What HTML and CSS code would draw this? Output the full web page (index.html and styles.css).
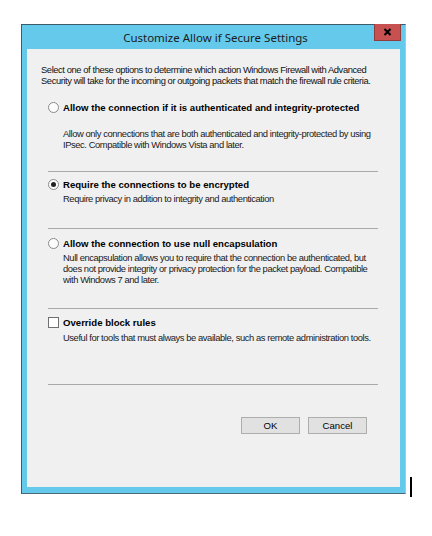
FILE: index.html
```html
<!DOCTYPE html>
<html>
<head>
<meta charset="utf-8">
<link rel="stylesheet" href="styles.css">
</head>
<body>
<div class="window">
  <div class="titlebar">
    <span class="title">Customize Allow if Secure Settings</span>
    <button class="close" aria-label="Close">
      <svg width="9" height="8" viewBox="0 0 9 8"><path d="M1.5 1 L7.5 7 M7.5 1 L1.5 7" stroke="#000" stroke-width="2"/></svg>
    </button>
  </div>
  <div class="panel">
    <p class="intro">Select one of these options to determine which action Windows Firewall with Advanced<br>Security will take for the incoming or outgoing packets that match the firewall rule criteria.</p>
    <div class="options">
      <div class="opt opt1">
        <span class="radio"></span>
        <span class="label">Allow the connection if it is authenticated and integrity-protected</span>
      </div>
      <p class="desc d1">Allow only connections that are both authenticated and integrity-protected by using<br>IPsec. Compatible with Windows Vista and later.</p>
      <hr class="sep s1">
      <div class="opt opt2">
        <span class="radio checked"></span>
        <span class="label">Require the connections to be encrypted</span>
      </div>
      <p class="desc d2">Require privacy in addition to integrity and authentication</p>
      <hr class="sep s2">
      <div class="opt opt3">
        <span class="radio"></span>
        <span class="label">Allow the connection to use null encapsulation</span>
      </div>
      <p class="desc d3">Null encapsulation allows you to require that the connection be authenticated, but<br>does not provide integrity or privacy protection for the packet payload. Compatible<br>with Windows 7 and later.</p>
      <hr class="sep s3">
      <div class="opt opt4">
        <span class="check"></span>
        <span class="label">Override block rules</span>
      </div>
      <p class="desc d4">Useful for tools that must always be available, such as remote administration tools.</p>
      <hr class="sep s4">
      <div class="buttons">
        <button class="btn">OK</button>
        <button class="btn">Cancel</button>
      </div>
    </div>
  </div>
</div>
<div class="cursor"></div>
</body>
</html>
```

FILE: styles.css
```css
html, body {
  margin: 0;
  padding: 0;
  background: #ffffff;
  width: 432px;
  height: 536px;
  overflow: hidden;
}
body {
  position: relative;
  font-family: "Liberation Sans", Arial, sans-serif;
  color: #000;
}
.window {
  margin: 24px 0 0 21px;
  width: 385px;
  height: 470px;
  box-sizing: border-box;
  background: #64c9ea;
  border-left: 1px solid #3c5b6b;
  border-top: 1px solid #3c5b6b;
  border-bottom: 1px solid #4a6878;
  border-right: 1px solid #b9c3c8;
  padding: 0 5px 6px 5px;
  display: flex;
  flex-direction: column;
  position: relative;
}
.titlebar {
  height: 24px;
  display: flex;
  align-items: center;
  justify-content: center;
  flex: none;
}
.title {
  font-family: "Noto Sans", "Open Sans", sans-serif;
  font-size: 11.5px;
  color: #1c1c1c;
  margin-left: 4px;
}
.close {
  position: absolute;
  top: -1px;
  right: 4px;
  width: 27px;
  height: 17px;
  padding: 0;
  margin: 0;
  background: #c75050;
  border: 1px solid #8e3c3c;
  border-top: none;
  display: flex;
  align-items: center;
  justify-content: center;
}
.panel {
  flex: 1;
  min-height: 0;
  overflow: hidden;
  background: #f0f0f0;
  padding: 15px 22px 0 14px;
  font-size: 9.4px;
  line-height: 11px;
  white-space: nowrap;
}
p { margin: 0; }
.intro, .desc {
  letter-spacing: -0.42px;
}
.intro { color: #111; }
.options { margin-left: 7px; }
.opt {
  display: flex;
  align-items: center;
  height: 13px;
}
.label {
  font-weight: bold;
  font-size: 9.6px;
  margin-left: 4px;
  color: #000;
}
.radio {
  width: 11px;
  height: 11px;
  box-sizing: border-box;
  border-radius: 50%;
  border: 1px solid #8a8a8a;
  background: #fcfcfc;
  position: relative;
  flex: none;
}
.radio.checked::after {
  content: "";
  position: absolute;
  left: 2px;
  top: 2px;
  width: 5px;
  height: 5px;
  border-radius: 50%;
  background: #222;
}
.check {
  width: 11px;
  height: 11px;
  box-sizing: border-box;
  border: 1px solid #707070;
  background: #ffffff;
  flex: none;
}
.desc {
  margin-left: 15px;
  color: #1a1a1a;
}
.sep {
  border: none;
  height: 1px;
  background: #a9a9a9;
  margin: 0;
}
.opt1 { margin-top: 15px; }
.d1 { margin-top: 14px; }
.s1 { margin-top: 21px; }
.opt2 { margin-top: 6px; }
.d2 { margin-top: 2px; }
.s2 { margin-top: 24px; }
.opt3 { margin-top: 8px; }
.d3 { margin-top: 2px; }
.s3 { margin-top: 23px; }
.opt4 { margin-top: 7px; }
.d4 { margin-top: 3px; }
.s4 { margin-top: 41px; }
.buttons {
  margin-top: 32px;
  margin-right: 11px;
  display: flex;
  justify-content: flex-end;
  gap: 8px;
}
.btn {
  width: 59px;
  height: 17px;
  box-sizing: border-box;
  background: #e1e1e1;
  border: 1px solid #adadad;
  font-family: "Liberation Sans", Arial, sans-serif;
  font-size: 9.6px;
  color: #000;
  padding: 0;
  margin: 0;
}
.cursor {
  position: absolute;
  left: 410px;
  top: 477px;
  width: 2px;
  height: 20px;
  background: #000;
}
```
